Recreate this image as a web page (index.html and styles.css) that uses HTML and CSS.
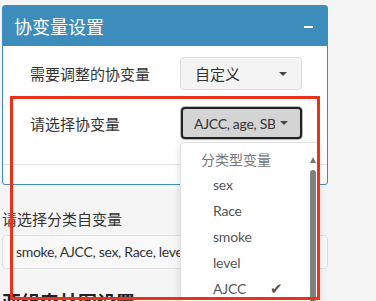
FILE: index.html
```html
<!DOCTYPE html>
<html lang="zh">
<head>
    <meta charset="UTF-8">
    <title>协变量设置</title>
    <link rel="stylesheet" href="styles.css">
</head>
<body>

    <div class="page">
        <div class="box">
            <div class="box-header">
                <span class="box-title">协变量设置</span>
                <span class="box-tool"></span>
            </div>
            <div class="box-body">
                <div class="form-row">
                    <label>需要调整的协变量</label>
                    <div class="select">
                        <span>自定义</span>
                        <span class="caret"></span>
                    </div>
                </div>
                <div class="form-row row-picker">
                    <label>请选择协变量</label>
                    <div class="picker">
                        <span class="picker-text">AJCC, age, SBP</span>
                        <span class="caret"></span>
                    </div>
                    <div class="dropdown">
                        <div class="dropdown-header">分类型变量</div>
                        <div class="dropdown-item">sex</div>
                        <div class="dropdown-item">Race</div>
                        <div class="dropdown-item">smoke</div>
                        <div class="dropdown-item">level</div>
                        <div class="dropdown-item">AJCC <span class="check">&#10004;</span></div>
                        <div class="scrollbar">
                            <span class="scroll-up"></span>
                            <span class="scroll-thumb"></span>
                        </div>
                    </div>
                </div>
            </div>
            <div class="box-footer"></div>
        </div>

        <div class="field">
            <label>请选择分类自变量</label>
            <div class="input">smoke, AJCC, sex, Race, level</div>
        </div>

        <h3 class="section-title">亚组森林图设置</h3>

        <div class="highlight"></div>
    </div>

</body>
</html>
```

FILE: styles.css
```css
/* Reset */
* {
    margin: 0;
    padding: 0;
    box-sizing: border-box;
}

body {
    font-family: "Source Sans Pro", Lato, "Noto Sans CJK SC", sans-serif;
    font-size: 14px;
    color: #333;
    background-color: #f5f5f5;
    overflow: hidden;
}

.page {
    position: relative;
    width: 328px;
    padding: 5px 0 0 2px;
}

/* Collapsible box */
.box {
    background: white;
    border: 1px solid #3c8dbc;
    border-radius: 3px;
}

.box-header {
    display: flex;
    justify-content: space-between;
    align-items: center;
    height: 40px;
    padding: 0 14px 0 11px;
    background-color: #3c8dbc;
    color: white;
}

.box-title {
    font-size: 18px;
}

.box-tool {
    width: 9px;
    height: 2px;
    background: white;
    margin-top: 1px;
}

.box-body {
    padding: 11px 25px 25px 27px;
}

.form-row {
    display: flex;
    justify-content: space-between;
    align-items: center;
}

.form-row label {
    font-size: 15px;
    color: #333;
}

.row-picker {
    position: relative;
    margin-top: 17px;
}

.select,
.picker {
    display: flex;
    justify-content: space-between;
    align-items: center;
    width: 122px;
    height: 33px;
    padding: 0 14px;
    border: 1px solid #ddd;
    border-radius: 4px;
    background: #f4f4f4;
    font-size: 15px;
}

.picker {
    width: 121px;
    height: 32px;
    padding: 0 12px 0 11px;
    background: #d4d4d4;
    border: 2px solid #222;
    box-shadow: 0 0 0 1px #bbb;
    border-radius: 4px;
    font-size: 14px;
    letter-spacing: -0.3px;
}

.picker-text {
    width: 81px;
    overflow: hidden;
    white-space: nowrap;
}

.caret {
    width: 0;
    height: 0;
    border-left: 4px solid transparent;
    border-right: 4px solid transparent;
    border-top: 4px solid #444;
}

/* Open dropdown over the content */
.dropdown {
    position: absolute;
    top: 35px;
    left: 150px;
    width: 139px;
    height: 160px;
    padding: 6px 0 0;
    background: white;
    border: 1px solid #e2e2e2;
    border-radius: 3px;
    box-shadow: 0 3px 8px rgba(0, 0, 0, 0.15);
    z-index: 2;
}

.dropdown-header {
    padding: 0 0 0 20px;
    height: 22px;
    line-height: 22px;
    font-size: 14px;
    color: #777;
}

.dropdown-item {
    display: flex;
    align-items: center;
    height: 26px;
    padding-left: 32px;
    font-size: 14px;
    letter-spacing: -0.2px;
    color: #555;
}

.check {
    margin-left: 24px;
    font-size: 15px;
    color: #555;
}

.scrollbar {
    position: absolute;
    top: 0;
    right: 2px;
    width: 6px;
    height: 100%;
}

.scroll-up {
    position: absolute;
    top: 14px;
    left: 0;
    width: 0;
    height: 0;
    border-left: 3px solid transparent;
    border-right: 3px solid transparent;
    border-bottom: 6px solid #777;
}

.scroll-thumb {
    position: absolute;
    top: 27px;
    left: 0;
    width: 6px;
    height: 140px;
    background: #808080;
    border-radius: 3px 3px 0 0;
}

.box-footer {
    height: 20px;
    border-top: 1px solid #e4e4e4;
}

/* Form below the box */
.field {
    margin-top: 23px;
}

.field label {
    display: block;
    font-size: 15px;
    margin-bottom: 6px;
}

.input {
    height: 34px;
    padding: 0 13px;
    line-height: 32px;
    border: 1px solid #ddd;
    border-radius: 4px;
    background: #f9f9f9;
    font-size: 14px;
    letter-spacing: -0.3px;
    white-space: nowrap;
    overflow: hidden;
}

.section-title {
    margin-top: 19px;
    font-size: 19px;
    font-weight: bold;
    color: #222;
}

/* Red annotation frame */
.highlight {
    position: absolute;
    top: 96px;
    left: 10px;
    width: 310px;
    height: 204px;
    border: 3px solid #e8321a;
    pointer-events: none;
    z-index: 3;
}
```
